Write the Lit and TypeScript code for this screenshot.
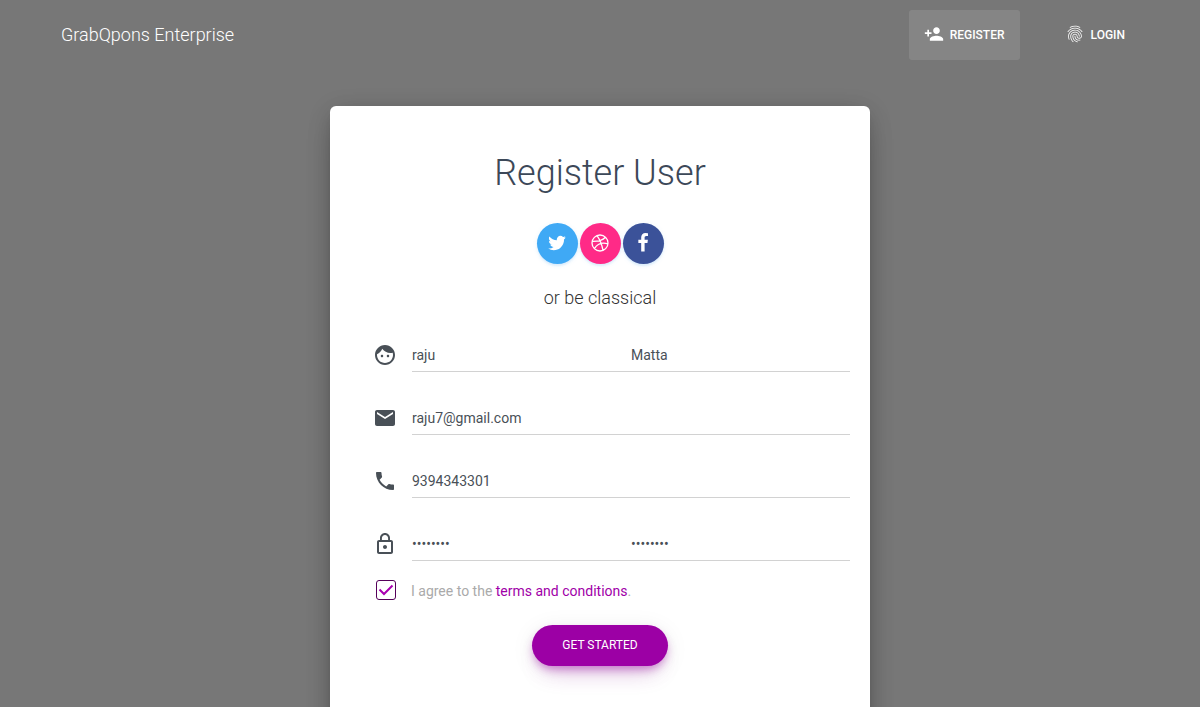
import { LitElement, html, css, svg } from "lit";
import { customElement, property, state } from "lit/decorators.js";

const icons: Record<string, { box: string; d: string; stroke?: boolean }> = {
  personAdd: {
    box: "0 0 24 24",
    d: "M15 12c2.21 0 4-1.79 4-4s-1.79-4-4-4-4 1.79-4 4 1.79 4 4 4zm-9-2V7H4v3H1v2h3v3h2v-3h3v-2H6zm9 4c-2.67 0-8 1.34-8 4v2h16v-2c0-2.66-5.33-4-8-4z",
  },
  fingerprint: {
    box: "0 0 24 24",
    d: "M17.81 4.47c-.08 0-.16-.02-.23-.06C15.66 3.42 14 3 12.01 3c-1.98 0-3.86.47-5.57 1.41-.24.13-.54.04-.68-.2-.13-.24-.04-.55.2-.68C7.82 2.52 9.86 2 12.01 2c2.13 0 3.99.47 6.03 1.52.25.13.34.43.21.67-.09.18-.26.28-.44.28zM3.5 9.72c-.1 0-.2-.03-.29-.09-.23-.16-.28-.47-.12-.7.99-1.4 2.25-2.5 3.75-3.27C9.98 4.04 14 4.03 17.15 5.65c1.5.77 2.76 1.86 3.75 3.25.16.22.11.54-.12.7-.23.16-.54.11-.7-.12-.9-1.26-2.04-2.25-3.39-2.94-2.87-1.47-6.54-1.47-9.4.01-1.36.7-2.5 1.7-3.4 2.96-.08.14-.23.21-.39.21zm6.25 12.07c-.13 0-.26-.05-.35-.15-.87-.87-1.34-1.43-2.01-2.64-.69-1.23-1.05-2.73-1.05-4.34 0-2.97 2.54-5.39 5.66-5.39s5.66 2.42 5.66 5.39c0 .28-.22.5-.5.5s-.5-.22-.5-.5c0-2.42-2.09-4.39-4.66-4.39-2.57 0-4.66 1.97-4.66 4.39 0 1.44.32 2.77.93 3.85.64 1.15 1.08 1.64 1.85 2.42.19.2.19.51 0 .71-.11.1-.24.15-.37.15zm7.17-1.85c-1.19 0-2.24-.3-3.1-.89-1.49-1.01-2.38-2.65-2.38-4.39 0-.28.22-.5.5-.5s.5.22.5.5c0 1.41.72 2.74 1.94 3.56.71.48 1.54.71 2.54.71.24 0 .64-.03 1.04-.1.27-.05.53.13.58.41.05.27-.13.53-.41.58-.57.11-1.07.12-1.21.12zM14.91 22c-.04 0-.09-.01-.13-.02-1.59-.44-2.63-1.03-3.72-2.1-1.4-1.39-2.17-3.24-2.17-5.22 0-1.62 1.38-2.94 3.08-2.94 1.7 0 3.08 1.32 3.08 2.94 0 1.07.93 1.94 2.08 1.94s2.08-.87 2.08-1.94c0-3.77-3.25-6.83-7.25-6.83-2.84 0-5.44 1.58-6.61 4.03-.39.81-.59 1.76-.59 2.8 0 .78.07 2.01.67 3.61.1.26-.03.55-.29.64-.26.1-.55-.04-.64-.29-.49-1.31-.73-2.61-.73-3.96 0-1.2.23-2.29.68-3.24 1.33-2.79 4.28-4.6 7.51-4.6 4.55 0 8.25 3.51 8.25 7.83 0 1.62-1.38 2.94-3.08 2.94s-3.08-1.32-3.08-2.94c0-1.07-.93-1.94-2.08-1.94s-2.08.87-2.08 1.94c0 1.71.66 3.31 1.87 4.51.95.94 1.86 1.46 3.27 1.85.27.07.42.35.35.61-.05.23-.26.38-.47.38z",
  },
  face: {
    box: "0 0 24 24",
    d: "M9 11.75c-.69 0-1.25.56-1.25 1.25s.56 1.25 1.25 1.25 1.25-.56 1.25-1.25-.56-1.25-1.25-1.25zm6 0c-.69 0-1.25.56-1.25 1.25s.56 1.25 1.25 1.25 1.25-.56 1.25-1.25-.56-1.25-1.25-1.25zM12 2C6.48 2 2 6.48 2 12s4.48 10 10 10 10-4.48 10-10S17.52 2 12 2zm0 18c-4.41 0-8-3.59-8-8 0-.29.02-.58.05-.86 2.36-1.05 4.23-2.98 5.21-5.37C11.07 8.33 14.05 10 17.42 10c.78 0 1.53-.09 2.25-.26.21.71.33 1.47.33 2.26 0 4.41-3.59 8-8 8z",
  },
  mail: {
    box: "0 0 24 24",
    d: "M20 4H4c-1.1 0-1.99.9-1.99 2L2 18c0 1.1.9 2 2 2h16c1.1 0 2-.9 2-2V6c0-1.1-.9-2-2-2zm0 4l-8 5-8-5V6l8 5 8-5v2z",
  },
  phone: {
    box: "0 0 24 24",
    d: "M6.62 10.79c1.44 2.83 3.76 5.14 6.59 6.59l2.2-2.2c.27-.27.67-.36 1.02-.24 1.12.37 2.33.57 3.57.57.55 0 1 .45 1 1V20c0 .55-.45 1-1 1-9.39 0-17-7.61-17-17 0-.55.45-1 1-1h3.5c.55 0 1 .45 1 1 0 1.25.2 2.45.57 3.57.11.35.03.74-.25 1.02l-2.2 2.2z",
  },
  lock: {
    box: "0 0 24 24",
    d: "M12 17c1.1 0 2-.9 2-2s-.9-2-2-2-2 .9-2 2 .9 2 2 2zm6-9h-1V6c0-2.76-2.24-5-5-5S7 3.24 7 6v2H6c-1.1 0-2 .9-2 2v10c0 1.1.9 2 2 2h12c1.1 0 2-.9 2-2V10c0-1.1-.9-2-2-2zM8.9 6c0-1.71 1.39-3.1 3.1-3.1s3.1 1.39 3.1 3.1v2H8.9V6zM18 20H6V10h12v10z",
  },
  twitter: {
    box: "0 0 1792 1792",
    d: "M1684 408q-67 98-162 167 1 14 1 42 0 130-38 259.5t-115.5 248.5-184.5 210.5-258 146-323 54.5q-271 0-496-145 35 4 78 4 225 0 401-138-105-2-188-64.5t-114-159.5q33 5 61 5 43 0 85-11-112-23-185.5-111.5t-73.5-205.5v-4q68 38 146 41-66-44-105-115t-39-154q0-88 44-163 121 149 294.5 238.5t371.5 99.5q-8-38-8-74 0-134 94.5-228.5t228.5-94.5q140 0 236 102 109-21 205-78-37 115-142 178 93-10 186-50z",
  },
  dribbble: {
    box: "0 0 20 20",
    stroke: true,
    d: "M18 10A8 8 0 1 1 2 10A8 8 0 1 1 18 10zM7 2.6Q11.3 8.4 13 17.3M2.2 8.4Q11.5 8.6 15.4 4.3M4.5 15.6C7.3 10.9 12.2 9.3 17.9 10.8",
  },
  facebook: {
    box: "0 0 1792 1792",
    d: "M1343 12v264h-157q-86 0-116 36t-30 108v189h293l-39 296h-254v759h-306v-759h-255v-296h255v-218q0-186 104-288.5t277-102.5q147 0 228 12z",
  },
};

@customElement("app-icon")
export class AppIcon extends LitElement {
  @property() name = "face";

  static styles = css`
    :host {
      display: block;
      flex: none;
      width: 24px;
      height: 24px;
    }
    .glyph {
      display: block;
      width: 100%;
      height: 100%;
      fill: currentColor;
    }
    .outline {
      fill: none;
      stroke: currentColor;
      stroke-width: 1.3;
    }
  `;

  render() {
    const icon = icons[this.name];
    return html`<svg
      class="glyph ${icon.stroke ? "outline" : ""}"
      viewBox=${icon.box}
      aria-hidden="true"
    >
      ${svg`<path d=${icon.d}></path>`}
    </svg>`;
  }
}

interface Field {
  label: string;
  type: string;
  value: string;
}

const rows: { icon: string; fields: Field[] }[] = [
  {
    icon: "face",
    fields: [
      { label: "First name", type: "text", value: "raju" },
      { label: "Last name", type: "text", value: "Matta" },
    ],
  },
  { icon: "mail", fields: [{ label: "Email", type: "email", value: "raju7@gmail.com" }] },
  { icon: "phone", fields: [{ label: "Phone number", type: "tel", value: "9394343301" }] },
  {
    icon: "lock",
    fields: [
      { label: "Password", type: "password", value: "raju1234" },
      { label: "Confirm password", type: "password", value: "raju1234" },
    ],
  },
];

@customElement("app-root")
export class AppRoot extends LitElement {
  @state() private agreed = true;

  static styles = css`
    :host {
      display: block;
      height: 100vh;
      overflow-y: auto;
      scrollbar-width: none;
      background: #777777;
      font-family: Roboto, "Liberation Sans", sans-serif;
      font-size: 14px;
      font-weight: 400;
      color: #3c4858;
    }
    * {
      box-sizing: border-box;
    }
    a {
      color: inherit;
      text-decoration: none;
    }
    .navbar {
      display: flex;
      align-items: center;
      justify-content: space-between;
      max-width: 1140px;
      margin: 0 auto;
      padding: 10px 30px 10px 31px;
      color: #ffffff;
    }
    .brand {
      font-size: 18px;
      font-weight: 300;
      line-height: 30px;
    }
    .menu {
      display: flex;
      gap: 30px;
      margin: 0;
      padding: 0;
      list-style: none;
    }
    .nav-link {
      display: flex;
      align-items: center;
      gap: 6px;
      height: 50px;
      padding: 0 15px;
      border-radius: 3px;
      font-size: 12px;
      font-weight: 500;
      line-height: 20px;
      text-transform: uppercase;
    }
    .nav-link.active {
      background: #858585;
    }
    .nav-icon {
      width: 20px;
      height: 20px;
      margin-bottom: 2px;
    }
    .card {
      width: 45%;
      min-width: 320px;
      max-width: 540px;
      margin: 36px auto 60px;
      padding: 40px 20px 80px;
      border-radius: 6px;
      background: #ffffff;
      box-shadow: 0 10px 30px -12px rgba(0, 0, 0, 0.42),
        0 4px 25px 0 rgba(0, 0, 0, 0.12), 0 8px 10px -5px rgba(0, 0, 0, 0.2);
    }
    .title {
      margin: 0;
      font-size: 36px;
      font-weight: 300;
      line-height: 54px;
      text-align: center;
    }
    .social {
      display: flex;
      justify-content: center;
      gap: 2px;
      margin-top: 23px;
    }
    .round {
      display: grid;
      place-items: center;
      width: 41px;
      height: 41px;
      padding: 0 0 2px;
      border: 0;
      border-radius: 50%;
      color: #ffffff;
      box-shadow: 0 2px 2px 0 rgba(85, 172, 238, 0.14),
        0 1px 5px 0 rgba(85, 172, 238, 0.12);
      cursor: pointer;
    }
    .round app-icon {
      width: 20px;
      height: 20px;
    }
    .twitter {
      background: #3fa9f5;
    }
    .dribbble {
      background: #ff2a87;
    }
    .facebook {
      background: #3b5299;
    }
    .classical {
      margin: 20px 0 25px;
      font-size: 18px;
      font-weight: 300;
      line-height: 27px;
      color: #333333;
      text-align: center;
    }
    .rows {
      display: grid;
      gap: 27px;
    }
    .row {
      display: flex;
      align-items: flex-end;
      gap: 15px;
      padding-left: 23px;
      color: #495057;
    }
    .row-icon {
      margin-bottom: 5px;
    }
    .fields {
      display: flex;
      flex: 1;
      min-width: 0;
      border-bottom: 1px solid #d2d2d2;
    }
    .field {
      flex: 1;
      width: 0;
      height: 35px;
      padding: 6px 0 4px;
      border: 0;
      outline: 0;
      background: transparent;
      color: #495057;
      font: inherit;
      line-height: 21px;
    }
    .agree {
      display: flex;
      align-items: center;
      gap: 15px;
      margin-top: 16px;
      padding-left: 26px;
      line-height: 24px;
      color: #aaaaaa;
    }
    .agree-text {
      padding-top: 2px;
    }
    .tick {
      display: grid;
      flex: none;
      width: 20px;
      height: 20px;
    }
    .box,
    .mark {
      grid-area: 1 / 1;
      width: 20px;
      height: 20px;
      margin: 0;
    }
    .box {
      appearance: none;
      border: 1px solid #55005a;
      border-radius: 3px;
      background: #ffffff;
    }
    .mark {
      visibility: hidden;
      fill: none;
      stroke: #a800b0;
      stroke-width: 2;
      pointer-events: none;
    }
    .box:checked + .mark {
      visibility: visible;
    }
    .terms {
      color: #a000a8;
    }
    .actions {
      display: flex;
      justify-content: center;
      margin-top: 22px;
    }
    .submit {
      height: 41px;
      padding: 0 30px;
      border: 0;
      border-radius: 30px;
      background: #9c00a5;
      color: #ffffff;
      font: inherit;
      font-size: 12px;
      line-height: 17px;
      text-transform: uppercase;
      box-shadow: 0 14px 26px -12px rgba(156, 0, 165, 0.3),
        0 4px 23px 0 rgba(0, 0, 0, 0.08), 0 5px 10px -2px rgba(156, 0, 165, 0.45);
      cursor: pointer;
    }
  `;

  private toggle(event: Event) {
    this.agreed = (event.target as HTMLInputElement).checked;
  }

  render() {
    return html`
      <nav class="navbar">
        <a class="brand" href="#">GrabQpons Enterprise</a>
        <ul class="menu">
          <li>
            <a class="nav-link active" href="#register">
              <app-icon class="nav-icon" name="personAdd"></app-icon>Register
            </a>
          </li>
          <li>
            <a class="nav-link" href="#login">
              <app-icon class="nav-icon" name="fingerprint"></app-icon>Login
            </a>
          </li>
        </ul>
      </nav>
      <main class="card">
        <h1 class="title">Register User</h1>
        <div class="social">
          ${["twitter", "dribbble", "facebook"].map(
            (name) => html`<button class="round ${name}" type="button" aria-label=${name}>
              <app-icon name=${name}></app-icon>
            </button>`
          )}
        </div>
        <p class="classical">or be classical</p>
        <form @submit=${(e: Event) => e.preventDefault()}>
          <div class="rows">
            ${rows.map(
              (row) => html`<div class="row">
                <app-icon class="row-icon" name=${row.icon}></app-icon>
                <div class="fields">
                  ${row.fields.map(
                    (f) => html`<input
                      class="field"
                      type=${f.type}
                      aria-label=${f.label}
                      .value=${f.value}
                    />`
                  )}
                </div>
              </div>`
            )}
          </div>
          <div class="agree">
            <span class="tick">
              <input
                class="box"
                id="agree"
                type="checkbox"
                .checked=${this.agreed}
                @change=${this.toggle}
              />
              <svg class="mark" viewBox="0 0 20 20" aria-hidden="true">
                <path d="M3.5 9.5 8 14 16.5 5.5"></path>
              </svg>
            </span>
            <label class="agree-text" for="agree"
              >I agree to the <a class="terms" href="#terms">terms and conditions</a>.</label
            >
          </div>
          <div class="actions">
            <button class="submit" type="submit">Get Started</button>
          </div>
        </form>
      </main>
    `;
  }
}
